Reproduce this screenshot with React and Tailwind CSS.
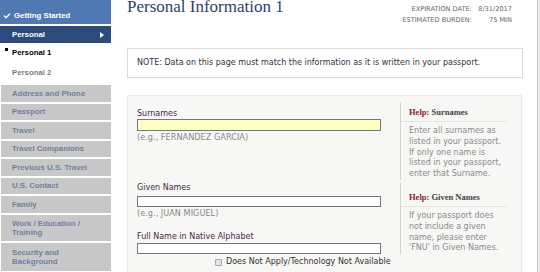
import { Check } from 'lucide-react';

const NAV = [
  { label: 'Address and Phone', h: 'h-[16.5px]' },
  { label: 'Passport', h: 'h-[16.5px]' },
  { label: 'Travel', h: 'h-[16.5px]' },
  { label: 'Travel Companions', h: 'h-[16.5px]' },
  { label: 'Previous U.S. Travel', h: 'h-[16.5px]' },
  { label: 'U.S. Contact', h: 'h-[16.5px]' },
  { label: 'Family', h: 'h-[16.5px]' },
  { label: ['Work / Education /', 'Training'], h: 'h-[26px]' },
  { label: ['Security and', 'Background'], h: 'h-[28px]' },
];

const sans = { fontFamily: '"DejaVu Sans", Verdana, sans-serif' };

function Sidebar() {
  return (
    <div className="w-[111px] flex-shrink-0 flex flex-col font-['Liberation_Sans',Arial,sans-serif] font-bold text-[7.8px]">
      <div className="h-[24px] shrink-0 bg-[#5079b3] text-white flex items-end pb-[3px] pl-[3px] leading-[10px]">
        <Check size={8} strokeWidth={4} className="mr-[3px] mb-[1px]" />
        Getting Started
      </div>
      <div className="h-[17px] shrink-0 mt-[2px] bg-[#2d4a7d] text-white flex items-center justify-between pl-[12px] pr-[7px]">
        <span>Personal</span>
        <span className="w-0 h-0 border-y-[3.5px] border-y-transparent border-l-[4px] border-l-white" />
      </div>
      <div className="h-[20px] shrink-0 flex items-center pl-[12px] text-black relative">
        <span className="absolute left-[5px] top-[5px] w-[3px] h-[3px] bg-black" />
        Personal 1
      </div>
      <div className="h-[20px] shrink-0 flex items-center pl-[12px] text-[#7d7d7d]">Personal 2</div>
      <div className="mt-[2px] shrink-0 flex flex-col gap-[2px] pl-[1px]">
        {NAV.map((n, i) => (
          <div key={i} className={`${n.h} shrink-0 bg-[#c8c8c8] text-[#7280a0] flex items-center pl-[11px] leading-[9px]`}>
            {Array.isArray(n.label) ? <span>{n.label[0]}<br />{n.label[1]}</span> : n.label}
          </div>
        ))}
      </div>
    </div>
  );
}

function Help({ title, lines, className }) {
  return (
    <div className={`border-l border-[#d8d4cc] pl-[8px] ${className}`}>
      <div className="pb-[3px] mr-[14px] -ml-[8px] pl-[8px] border-b border-[#e6e2da] leading-[12px] text-[8.5px] font-bold font-['Liberation_Serif',serif]">
        <span className="text-[#8b1c1c]">Help: </span>
        <span className="text-[#444]">{title}</span>
      </div>
      <div className="pt-[4px] text-[8px] leading-[10.8px] text-[#8a8a8a]" style={sans}>
        {lines.map((l, i) => <div key={i}>{l}</div>)}
      </div>
    </div>
  );
}

export default function App() {
  return (
    <div className="w-[540px] h-[272px] overflow-hidden flex bg-white">
      <Sidebar />
      <div className="w-[426px] flex-shrink-0 pl-[16px] flex flex-col">
        <div className="h-[48px] shrink-0 flex justify-between items-start">
          <div className="mt-[-3px] text-[17px] leading-[20px] text-[#2f3f6e] font-['Liberation_Serif',serif]">
            Personal Information 1
          </div>
          <div className="mt-[-7px] mr-[25px] grid grid-cols-[auto_34px] content-start gap-x-[6px] text-[6.6px] leading-[11px] text-[#666] text-right" style={sans}>
            <span>FORM NUMBER:</span><span>DS-160</span>
            <span>EXPIRATION DATE:</span><span>8/31/2017</span>
            <span>ESTIMATED BURDEN:</span><span>75 MIN</span>
          </div>
        </div>

        <div className="w-[396px] h-[30px] shrink-0 border border-[#dcdcdc] bg-white flex items-center pl-[9px] text-[8px] text-[#3a3040]" style={sans}>
          NOTE: Data on this page must match the information as it is written in your passport.
        </div>

        <div className="w-[395px] mt-[17px] h-[200px] shrink-0 bg-[#f7f7f5] border border-[#efeae1] flex">
          <div className="w-[272px] pl-[9px] pt-[13px] text-[8px]" style={sans}>
            <div className="leading-[10px] text-[#442a44]">Surnames</div>
            <div className="w-[244px] h-[12px] border border-[#777] bg-[#ffffc4]" />
            <div className="leading-[12px] text-[8.2px] text-[#8a8a8a]">(e.g., FERNANDEZ GARCIA)</div>

            <div className="mt-[40px] leading-[10px] text-[#442a44]">Given Names</div>
            <div className="mt-[3px] w-[244px] h-[11px] border border-[#777] bg-white" />
            <div className="leading-[12px] text-[8.2px] text-[#8a8a8a]">(e.g., JUAN MIGUEL)</div>

            <div className="mt-[13px] leading-[10px] text-[#442a44]">Full Name in Native Alphabet</div>
            <div className="mt-[1px] w-[244px] h-[11px] border border-[#777] bg-white" />
            <div className="mt-[2px] ml-[78px] flex items-center gap-[4px] leading-[12px] text-[#333] whitespace-nowrap">
              <span className="w-[7px] h-[7px] rounded-[1px] border border-[#a8a8a8] bg-[#e4e4e4]" />
              Does Not Apply/Technology Not Available
            </div>
          </div>

          <div className="flex-1 flex flex-col pt-[6px]">
            <Help
              title="Surnames"
              className="pt-[4px]"
              lines={['Enter all surnames as', 'listed in your passport.', 'If only one name is', 'listed in your passport,', 'enter that Surname.']}
            />
            <Help
              title="Given Names"
              className="mt-[3px] pt-[8px]"
              lines={['If your passport does', 'not include a given', "name, please enter", "'FNU' in Given Names."]}
            />
          </div>
        </div>
      </div>
      <div className="flex-1 border-l border-[#c8c8c8] bg-[#ececec]" />
    </div>
  );
}
